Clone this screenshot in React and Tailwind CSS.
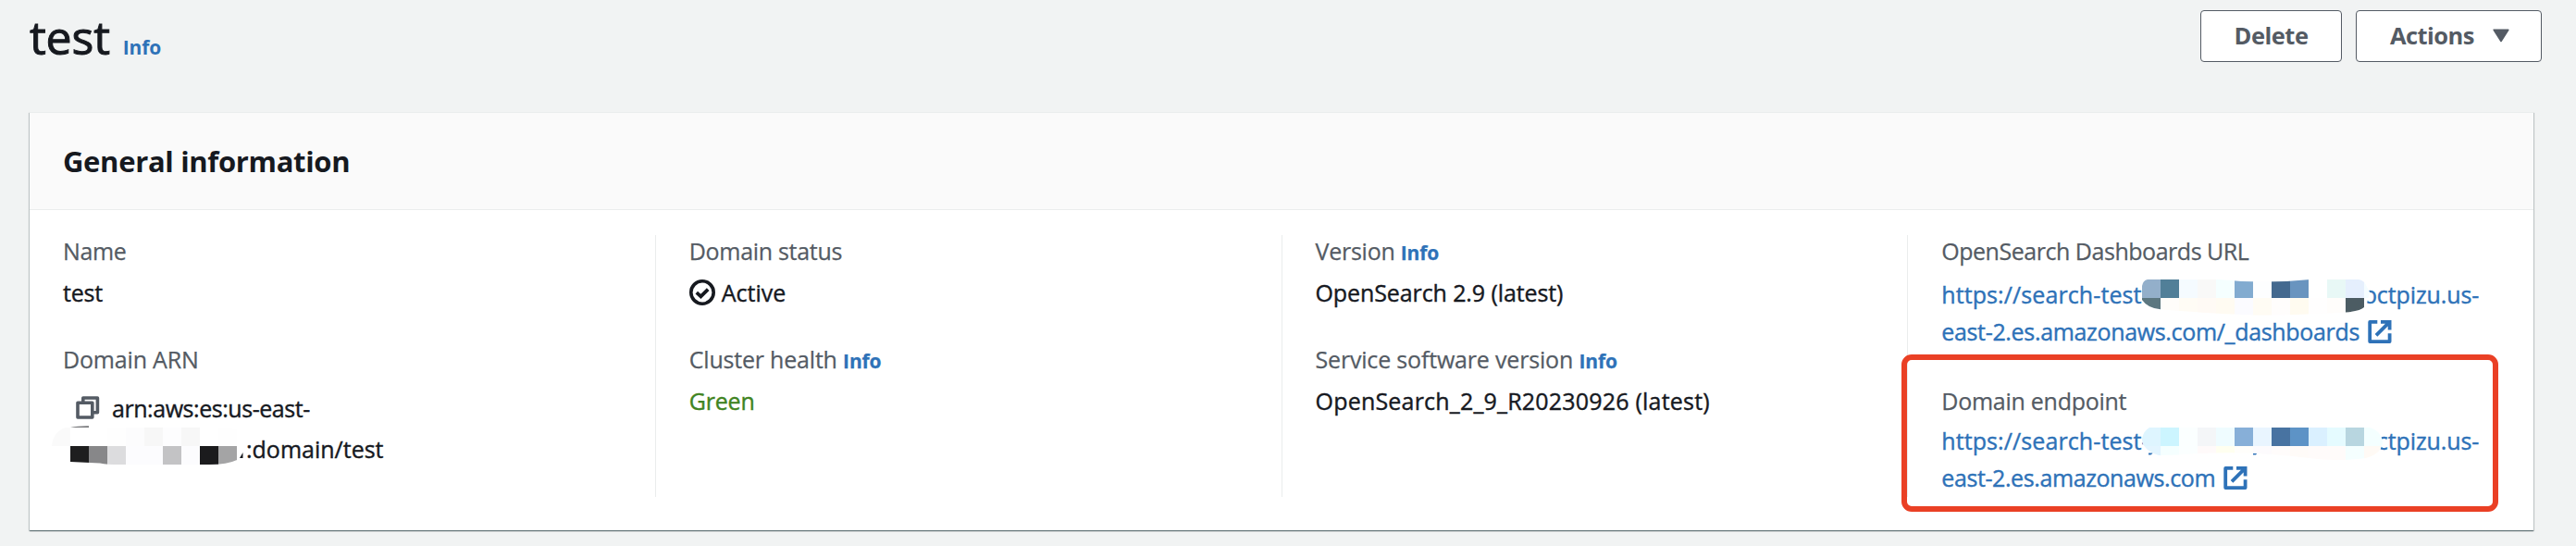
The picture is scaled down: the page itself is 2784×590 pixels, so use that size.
import React from 'react';

const Info = ({ className = '' }) => (
  <a className={`text-[21px] font-bold tracking-[-0.1px] text-[#2e72b8] ${className}`}>Info</a>
);

const Label = ({ children, className = 'leading-[34px]' }) => (
  <div className={`h-9 whitespace-nowrap text-[#545b64] [-webkit-text-stroke:0.25px] ${className}`}>{children}</div>
);

const ExternalIcon = ({ className = '' }) => (
  <svg className={`h-[25px] w-[26px] ${className}`} viewBox="0 0 26 25" fill="none" stroke="#2e72b8" strokeWidth="3.8">
    <path d="M10.3 1.9H2.2V23.1H23.6V14.2" strokeLinejoin="round" />
    <path d="M14 1.9H23.6V10.6M9 16.3L22.8 2.6" />
  </svg>
);

const CopyIcon = () => (
  <svg className="h-[26px] w-[26px]" viewBox="0 0 26 26" fill="none" stroke="#545b64" strokeWidth="3.6" strokeLinejoin="round">
    <path d="M7.8 6V2H23.4V17.7H19" />
    <path d="M2 7.2H17.8V23H2Z" />
  </svg>
);

const CheckIcon = () => (
  <svg className="h-7 w-7" viewBox="0 0 28 28" fill="none" stroke="#16191f">
    <circle cx="14" cy="14" r="12.2" strokeWidth="3.6" />
    <path d="M7.8 14.2L12.4 18.3L20.2 10.6" strokeWidth="3.8" />
  </svg>
);

const Cells = ({ y, h, colors }) =>
  colors.map((c, i) => (c ? <rect key={i} x={i * 20} y={y} width="20" height={h} fill={c} shapeRendering="crispEdges" /> : null));

const DashboardMosaic = () => (
  <svg className="absolute left-[217px] top-1 h-10 w-[260px]" viewBox="0 0 260 40">
    <clipPath id="m1">
      <path d="M6 0H84Q130 5 182 0H234Q240 1 242 6L246 14L243 26L240 30Q236 34 220 35.5Q160 39 120 38.5Q60 36 20 32.3Q6 31 0 22V7Q1 1 6 0Z" />
    </clipPath>
    <g clipPath="url(#m1)">
      <rect width="260" height="40" fill="#fff" />
      <Cells y={0} h={20} colors={['#93afca', '#517f98', '#f5fbff', '#f9f9f8', '#f5ffff', '#82abd0', '#fdfeff', '#44698f', '#6994bf', '#ffffff', '#e8f8f6', '#e5effd', '#f5fdff']} />
      <Cells y={20} h={20} colors={['#5c7780', '#fffdfa', '#fffcf5', '#fffaf5', '#fffbf2', '#fbfbff', '#fffcf4', '#fffdfc', '#fffbf0', '#fffefe', '#fffdfb', '#4c5c63']} />
    </g>
  </svg>
);

const EndpointMosaic = () => (
  <svg className="absolute left-[217px] top-1.5 h-10 w-[260px]" viewBox="0 0 260 40">
    <clipPath id="m2">
      <path d="M8 0H246Q256 2 260 14Q260 28 242 33Q210 37 180 33Q120 25 60 28Q40 30 18 30Q0 24 0 12Q2 3 8 0Z" />
    </clipPath>
    <path d="M7 27.5H12L9.5 29.6H7ZM120 27.5H124.5L123 29.6H120Z" fill="#2e72b8" />
    <g clipPath="url(#m2)">
      <rect width="260" height="40" fill="#fff" />
      <Cells y={0} h={20} colors={['#def5ff', '#ccf5ff', '#fbffff', '#f4f6f8', '#effcff', '#87afd8', '#e9f5ff', '#4873a1', '#5d93c6', '#daf0ff', '#e5fbff', '#b8d6e0', '#f4ffff']} />
      <Cells y={20} h={20} colors={['#e3f5ff', '#f5ffff', '#fbffff', '#fffafa', '#fffff0', '#fffefb', '#fdfbfd', '#fffcfb', '#fffbf8', '#fffbfa', '#fffbfa', '#f5ffff', '#fffaf5']} />
    </g>
  </svg>
);

const ArnMosaic = () => (
  <svg className="absolute -left-3 -top-1 h-11 w-[220px]" viewBox="0 0 220 44">
    <clipPath id="m3">
      <path d="M0 23Q2 4 20 2H170L200 5V38Q190 43 170 43H72Q60 43 52 41.5L20 40V23Z" />
    </clipPath>
    <path d="M20 3Q28 1 40 1.2V3Z" fill="#77787b" />
    <path d="M203 36L206.5 30V36Z" fill="#16191f" />
    <g clipPath="url(#m3)">
      <Cells y={3} h={20} colors={['#fafafa', '#ffffff', '#ffffff', '#fefefe', '#fcfcfd', '#f7f7f7', '#fdfdfe', '#f7f7f7', '#ffffff', '#fefefe']} />
      <Cells y={23} h={20} colors={['', '#1e1e1f', '#878789', '#dcdcde', '#fcfcfe', '#fcfcfe', '#c3c3c5', '#fcfcfe', '#1b1b1d', '#a4a4a5']} />
    </g>
  </svg>
);

const Column = ({ children, first }) => (
  <div className={`relative flex h-[283px] flex-1 flex-col pl-9 [-webkit-text-stroke:0.4px] ${first ? '' : 'border-l border-[#eaeded]'}`}>{children}</div>
);

export default function App() {
  return (
    <div className="h-[590px] w-[2784px] overflow-hidden bg-[#f1f3f3] font-['Open_Sans','Noto_Sans',sans-serif] text-[25px] text-[#16191f]">
      <header className="flex h-[121px] items-start justify-between pl-8 pr-[37px]">
        <div className="flex items-baseline gap-3.5 pt-2">
          <h1 className="text-[50px] font-medium leading-[64px] tracking-[-0.2px] [-webkit-text-stroke:1px]">test</h1>
          <Info />
        </div>
        <div className="flex gap-[15px] pt-[11px] text-[25.5px] font-bold text-[#545b64]">
          <button className="flex h-14 w-[153px] items-center justify-center rounded-[4px] border border-[#545b64] bg-white pb-0.5 tracking-[-0.5px]">Delete</button>
          <button className="flex h-14 w-[201px] items-center gap-5 rounded-[4px] border border-[#545b64] bg-white pb-0.5 pl-9 tracking-[-0.55px]">
            Actions
            <svg className="h-[15px] w-[18px]" viewBox="0 0 18 15">
              <path d="M1.2 1.2H16.8L9 13.5Z" fill="#545b64" stroke="#545b64" strokeWidth="1.6" strokeLinejoin="round" />
            </svg>
          </button>
        </div>
      </header>

      <main className="ml-8 h-[452px] w-[2706px] border-t border-[#eaeded] bg-white shadow-[0_1px_1px_0_rgba(0,28,36,0.45),1px_1px_1px_0_rgba(0,28,36,0.15),-1px_1px_1px_0_rgba(0,28,36,0.15)]">
        <div className="h-[105px] border-b border-[#eaeded] bg-[#fafafa] pl-[36px]">
          <h2 className="text-[31px] font-bold leading-[104px] tracking-[-0.33px]">General information</h2>
        </div>
        <div className="flex pt-[27px]">
          <Column first>
            <Label className="leading-[34px] tracking-[-0.4px]">Name</Label>
            <div className="mt-1 h-11 font-medium leading-[44px] tracking-[-0.2px]">test</div>
            <Label className="mt-8 leading-9 tracking-[-0.18px]">Domain ARN</Label>
            <div className="mt-[13px] flex h-11 items-center gap-[13px] pl-[14px] font-medium leading-[44px]">
              <CopyIcon />
              <span className="tracking-[-0.45px]">arn:aws:es:us-east-</span>
            </div>
            <div className="relative h-11 pl-[198px] font-medium leading-[44px]">
              :domain/test
              <ArnMosaic />
            </div>
          </Column>

          <Column>
            <Label className="leading-[34px] tracking-[-0.3px]">Domain status</Label>
            <div className="mt-1 flex h-11 items-center gap-[7px] font-medium leading-[44px]">
              <CheckIcon />
              Active
            </div>
            <Label className="mt-8 leading-9 tracking-[-0.2px]">Cluster health <Info /></Label>
            <div className="mt-[5px] h-11 font-medium leading-[44px] tracking-[-0.2px] text-[#3f8422]">Green</div>
          </Column>

          <Column>
            <Label className="leading-[34px] tracking-[-0.25px]">Version <Info /></Label>
            <div className="mt-1 h-11 font-medium leading-[44px] tracking-[-0.1px]">OpenSearch 2.9 (latest)</div>
            <Label className="mt-8 leading-9 tracking-[-0.18px]">Service software version <Info /></Label>
            <div className="mt-[5px] h-11 font-medium leading-[44px] tracking-[0.2px]">OpenSearch_2_9_R20230926 (latest)</div>
          </Column>

          <Column>
            <Label className="leading-[34px] tracking-[-0.47px]">OpenSearch Dashboards URL</Label>
            <div className="relative mt-2 flex h-10 w-[581px] justify-between font-medium leading-10 text-[#2e72b8]">
              <span className="tracking-[0.1px]">https://search-test</span>
              <span className="tracking-[-0.1px]">octpizu.us-</span>
              <DashboardMosaic />
            </div>
            <div className="flex h-10 items-center gap-[9px] font-medium leading-10 text-[#2e72b8]">
              <span className="tracking-[-0.33px]">east-2.es.amazonaws.com/_dashboards</span>
              <ExternalIcon />
            </div>
            <Label className="mt-[37px] leading-9 tracking-[-0.26px]">Domain endpoint</Label>
            <div className="relative mt-[5px] flex h-10 w-[581px] justify-between font-medium leading-10 text-[#2e72b8]">
              <span className="tracking-[0.1px]">https://search-test-</span>
              <span className="tracking-[-0.1px]">ctpizu.us-</span>
              <EndpointMosaic />
            </div>
            <div className="flex h-10 items-center gap-[9px] font-medium leading-10 text-[#2e72b8]">
              <span className="tracking-[-0.4px]">east-2.es.amazonaws.com</span>
              <ExternalIcon />
            </div>
            <div className="absolute -left-[7px] top-[129px] h-[170px] w-[645px] rounded-[11px] border-[6px] border-[#ea4025]" />
          </Column>
        </div>
      </main>
    </div>
  );
}
